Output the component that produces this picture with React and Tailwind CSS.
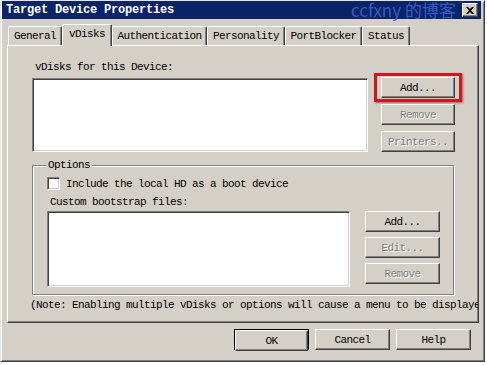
import React from 'react';

const mono = "font-['Liberation_Mono',monospace] text-[11px] tracking-[-0.6px] leading-[12px] text-black";

const Btn = ({ children, disabled, className = '' }) => (
  <div
    className={`flex items-center justify-center h-[21px] bg-[#d4d0c8] border border-t-white border-l-white border-r-[#404040] border-b-[#404040] shadow-[inset_-1px_-1px_#808080] ${
      disabled ? 'text-[#808080] [text-shadow:1px_1px_0_#ffffff]' : 'text-black'
    } ${className}`}
  >
    {children}
  </div>
);

const ListBox = ({ className = '' }) => (
  <div
    className={`bg-white border border-t-[#808080] border-l-[#808080] border-r-white border-b-white shadow-[inset_1px_1px_#404040,inset_-1px_-1px_#d4d0c8] ${className}`}
  />
);

const tabs = [
  { name: 'General', w: 'w-[54px]' },
  { name: 'vDisks', w: 'w-[50px]', active: true },
  { name: 'Authentication', w: 'w-[95px]' },
  { name: 'Personality', w: 'w-[78px]' },
  { name: 'PortBlocker', w: 'w-[77px]' },
  { name: 'Status', w: 'w-[48px]' },
];

export default function App() {
  return (
    <div className={`relative w-[487px] h-[365px] bg-white overflow-hidden ${mono}`}>
      {/* window */}
      <div className="w-[485px] h-[362px] bg-[#d4d0c8] border border-t-[#e8e6e0] border-l-[#e8e6e0] border-r-[#404040] border-b-[#404040] shadow-[inset_1px_1px_#ffffff,inset_-1px_-1px_#808080] pl-[1px] pr-[3px] pt-0">
        {/* title bar */}
        <div className="flex items-center justify-between h-[18px] bg-[#0a246a] pl-[4px] pr-[3px]">
          <span className="font-bold text-[12px] tracking-[-0.2px] text-white">Target Device Properties</span>
          <div className="relative z-10 flex items-center justify-center w-[16px] h-[14px] bg-[#d4d0c8] border border-t-white border-l-white border-r-[#404040] border-b-[#404040] shadow-[inset_-1px_-1px_#808080]">
            <svg width="8" height="7" viewBox="0 0 8 7">
              <path d="M0 0h2l2 2 2-2h2L5 3.5 8 7H6L4 5 2 7H0l3-3.5z" fill="#000" />
            </svg>
          </div>
        </div>

        {/* tabs */}
        <div className="flex items-end h-[21px] mt-[5px] ml-[6px]">
          {tabs.map((t) => (
            <div
              key={t.name}
              className={`${t.w} flex items-center justify-center bg-[#d4d0c8] border-t border-l border-r border-t-white border-l-white border-r-[#404040] rounded-t-[2px] shadow-[inset_-1px_0_#808080] ${
                t.active ? 'h-[22px] -mb-[1px] relative z-10 pb-[3px]' : 'h-[19px]'
              }`}
            >
              {t.name}
            </div>
          ))}
        </div>

        {/* tab panel */}
        <div className="ml-[5px] w-[472px] h-[278px] border border-t-white border-l-white border-r-[#404040] border-b-[#404040] shadow-[inset_-1px_-1px_#808080] overflow-hidden">
          <div className="mt-[15px] pl-[27px]">vDisks for this Device:</div>

          <div className="flex mt-[4px] pl-[24px]">
            <ListBox className="w-[336px] h-[74px] mt-[1px]" />
            <div className="flex flex-col gap-[6px] ml-[13px] w-[74px]">
              <div className="relative">
                <Btn>Add...</Btn>
                <div className="absolute -left-[7px] -right-[7px] -top-[4px] -bottom-[4px] border-[3px] border-[#d0161c] shadow-[1px_1px_2px_rgba(90,0,0,0.5)]" />
              </div>
              <Btn disabled>Remove</Btn>
              <Btn disabled>Printers..</Btn>
            </div>
          </div>

          {/* options group */}
          <div className="relative mt-[13px] ml-[24px] w-[422px] h-[130px] border border-[#808080] shadow-[inset_1px_1px_#ffffff,1px_1px_#ffffff]">
            <span className="absolute left-[13px] -top-[7px] px-[2px] bg-[#d4d0c8]">Options</span>
            <div className="flex items-center mt-[11px] pl-[14px]">
              <div className="w-[13px] h-[13px] bg-white border border-t-[#808080] border-l-[#808080] border-r-white border-b-white shadow-[inset_1px_1px_#404040,inset_-1px_-1px_#d4d0c8]" />
              <span className="ml-[6px]">Include the local HD as a boot device</span>
            </div>
            <div className="mt-[6px] pl-[17px]">Custom bootstrap files:</div>
            <div className="flex mt-[3px] pl-[14px]">
              <ListBox className="w-[303px] h-[76px]" />
              <div className="flex flex-col gap-[5px] ml-[15px] w-[75px]">
                <Btn>Add...</Btn>
                <Btn disabled>Edit...</Btn>
                <Btn disabled>Remove</Btn>
              </div>
            </div>
          </div>

          <div className="mt-[4px] pl-[22px] whitespace-nowrap">
            (Note: Enabling multiple vDisks or options will cause a menu to be displaye
          </div>
        </div>

        {/* dialog buttons */}
        <div className="flex justify-end gap-[6px] mt-[6px] w-[480px] pr-[11px]">
          <div className="w-[75px] h-[21px] border border-black">
            <Btn className="h-[19px]">OK</Btn>
          </div>
          <Btn className="w-[75px]">Cancel</Btn>
          <Btn className="w-[75px]">Help</Btn>
        </div>
      </div>

      {/* blog watermark */}
      <span className="absolute left-[351px] top-0 font-['Noto_Sans_CJK_SC',sans-serif] text-[17px] tracking-normal leading-[19px] text-[#3a62cc] opacity-90">
        ccfxny 的博客
      </span>
    </div>
  );
}
